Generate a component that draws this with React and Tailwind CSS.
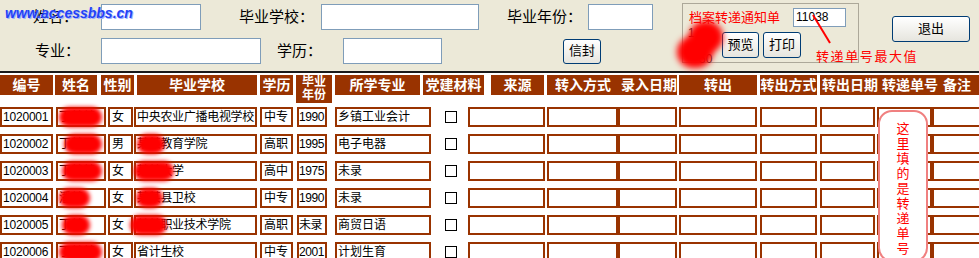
import React from "react";

const font = "font-['Liberation_Sans','Noto_Sans_CJK_SC',sans-serif]";

const rows = [
  { id: "1020001", name: "丁某某", nameBlob: "left-[1px] w-[43px]", sex: "女", school: "中央农业广播电视学校", schoolBlob: "", edu: "中专", year: "1990", major: "乡镇工业会计" },
  { id: "1020002", name: "丁某平", nameBlob: "left-[6px] w-[38px]", sex: "男", school: "某某教育学院", schoolBlob: "left-[1px] w-[28px]", edu: "高职", year: "1995", major: "电子电器" },
  { id: "1020003", name: "丁某某", nameBlob: "left-[4px] w-[40px]", sex: "女", school: "某某大学", schoolBlob: "left-[-2px] w-[40px]", edu: "高中", year: "1975", major: "未录" },
  { id: "1020004", name: "潘某", nameBlob: "left-[1px] w-[31px]", sex: "女", school: "某某县卫校", schoolBlob: "left-[0px] w-[27px]", edu: "中专", year: "1990", major: "未录" },
  { id: "1020005", name: "丁某", nameBlob: "left-[4px] w-[28px]", sex: "女", school: "某某职业技术学院", schoolBlob: "left-[-6px] w-[37px]", edu: "高职", year: "未录", major: "商贸日语" },
  { id: "1020006", name: "丁某某", nameBlob: "left-[1px] w-[43px]", sex: "女", school: "省计生校", schoolBlob: "", edu: "中专", year: "2001", major: "计划生育" },
];

const cell = "h-[20px] shrink-0 border-2 border-[#993300] bg-white text-[12px] leading-[16px] text-black whitespace-nowrap overflow-visible";
const head = "h-[20px] shrink-0 bg-[#993300] text-white font-bold text-[14px] leading-[20px] text-center whitespace-nowrap";
const box = "h-[26px] shrink-0 border border-[#7f9db9] bg-white";
const btn = "shrink-0 rounded-[3px] border border-[#003c74] bg-linear-to-b from-white to-[#e6e5de] text-[13px] text-black";

function Blob({ cls }) {
  if (!cls) return null;
  return <span className={`pointer-events-none absolute top-[-2px] h-[20px] rounded-full bg-[#ff0000] blur-[2px] ${cls}`} />;
}

export default function App() {
  return (
    <div className={`relative h-[258px] w-[979px] overflow-hidden bg-white ${font}`}>
      {/* form header */}
      <div className="flex h-[71px] bg-[#ECE9D8]">
        <div className="w-[682px] shrink-0 text-[15px] text-black">
          <div className="mt-[4px] flex h-[26px] items-center">
            <span className="w-[101px] shrink-0 pl-[33px]">姓名：</span>
            <div className={`${box} w-[100px]`} />
            <span className="ml-[38px] w-[82px] shrink-0">毕业学校：</span>
            <div className={`${box} w-[158px]`} />
            <span className="ml-[28px] w-[81px] shrink-0">毕业年份：</span>
            <div className={`${box} w-[65px]`} />
          </div>
          <div className="mt-[8px] flex h-[26px] items-center">
            <span className="w-[101px] shrink-0 pl-[35px]">专业：</span>
            <div className={`${box} w-[160px]`} />
            <span className="ml-[16px] w-[66px] shrink-0">学历：</span>
            <div className={`${box} w-[99px]`} />
            <button className={`${btn} ml-[121px] h-[25px] w-[38px]`}>信封</button>
          </div>
        </div>

        <div className="mt-[3px] h-[60px] w-[177px] shrink-0 border border-[#aca899]">
          <div className="flex items-center pt-[4px]">
            <span className="ml-[6px] text-[13px] text-[#ff0000]">档案转递通知单</span>
            <div className="ml-auto mr-[12px] h-[19px] w-[53px] border border-[#7f9db9] bg-white pl-[2px] text-[12px] leading-[17px]">11038</div>
          </div>
          <div className="mt-[4px] flex pl-[39px]">
            <button className={`${btn} h-[26px] w-[37px]`}>预览</button>
            <button className={`${btn} ml-[4px] h-[26px] w-[38px]`}>打印</button>
          </div>
        </div>

        <button className={`${btn} ml-[33px] mt-[16px] h-[26px] w-[78px]`}>退出</button>
      </div>
      <div className="h-[2px] bg-[#1a1a1a]" />

      {/* table header */}
      <div className="mt-[2px] flex items-start">
        <div className={`${head} w-[53px]`}>编号</div>
        <div className={`${head} ml-[2px] w-[42px]`}>姓名</div>
        <div className={`${head} ml-[4px] w-[33px]`}>性别</div>
        <div className={`${head} ml-[3px] w-[120px]`}>毕业学校</div>
        <div className={`${head} ml-[3px] w-[33px]`}>学历</div>
        <div className="ml-[3px] flex h-[28px] w-[36px] shrink-0 flex-col items-center justify-center bg-[#993300] text-[12px] font-bold leading-[13px] text-white">
          <span>毕业</span>
          <span>年份</span>
        </div>
        <div className={`${head} ml-[3px] w-[85px]`}>所学专业</div>
        <div className={`${head} ml-[3px] w-[61px]`}>党建材料</div>
        <div className={`${head} ml-[7px] w-[53px]`}>来源</div>
        <div className={`${head} ml-[3px] flex w-[130px]`}>
          <span className="ml-[8px]">转入方式</span>
          <span className="ml-[10px]">录入日期</span>
        </div>
        <div className={`${head} ml-[2px] w-[78px]`}>转出</div>
        <div className={`${head} ml-[3px] w-[57px]`}>转出方式</div>
        <div className={`${head} ml-[3px] flex w-[159px] text-[13px]`}>
          <span className="ml-[2px]">转出日期</span>
          <span className="ml-[4px]">转递单号</span>
          <span className="ml-[5px]">备注</span>
        </div>
      </div>

      {/* rows */}
      <div className="mt-[4px] flex flex-col gap-[7px]">
        {rows.map((r) => (
          <div key={r.id} className="flex h-[20px] items-center">
            <div className={`${cell} w-[53px] pl-[1px] tracking-[-0.2px]`}>{r.id}</div>
            <div className={`${cell} relative ml-[3px] w-[50px] pl-[1px] text-[#444]`}>
              {r.name}
              <Blob cls={r.nameBlob} />
            </div>
            <div className={`${cell} ml-[2px] w-[25px] pl-[2px]`}>{r.sex}</div>
            <div className={`${cell} relative ml-[1px] w-[123px] pl-[1px] tracking-[-0.3px]`}>
              {r.school}
              <Blob cls={r.schoolBlob} />
            </div>
            <div className={`${cell} ml-[3px] w-[33px] pl-[2px]`}>{r.edu}</div>
            <div className={`${cell} ml-[4px] w-[30px] tracking-[-0.4px]`}>{r.year}</div>
            <div className={`${cell} ml-[8px] w-[96px] pl-[1px]`}>{r.major}</div>
            <div className="w-[37px] shrink-0">
              <div className="ml-[14px] h-[12px] w-[12px] border border-black bg-white" />
            </div>
            <div className={`${cell} w-[77px]`} />
            <div className={`${cell} ml-[2px] w-[71px]`} />
            <div className={`${cell} w-[59px]`} />
            <div className={`${cell} ml-[2px] w-[78px]`} />
            <div className={`${cell} ml-[3px] w-[57px]`} />
            <div className={`${cell} ml-[3px] w-[55px]`} />
            <div className={`${cell} ml-[2px] w-[55px]`} />
            <div className={`${cell} w-[60px]`} />
          </div>
        ))}
      </div>

      {/* overlays: redaction, watermark, annotations */}
      <span className="absolute left-[688px] top-[24px] text-[12px] text-[#333]">1</span>
      <span className="absolute left-[699px] top-[50px] text-[12px] text-[#333]">50</span>
      <span className="pointer-events-none absolute left-[689px] top-[21px] h-[32px] w-[34px] rounded-full bg-[#ff0000] blur-[3px]" />
      <span className="pointer-events-none absolute left-[677px] top-[36px] h-[32px] w-[36px] rounded-full bg-[#ff0000] blur-[3px]" />

      <div className="absolute left-[5px] top-[3px] font-['Liberation_Sans_Narrow','Liberation_Sans',sans-serif] text-[14px] font-bold italic text-[#2342f5] [text-shadow:1px_1px_0_#9fb0ff]">
        www.accessbbs.cn
      </div>
      <svg className="absolute left-[810px] top-[12px]" width="24" height="34" viewBox="0 0 24 34">
        <line x1="3" y1="3" x2="20" y2="31" stroke="#ff0000" strokeWidth="2" />
      </svg>
      <div className="absolute left-[816px] top-[47px] text-[13px] tracking-[1.6px] text-[#ff0000]">转递单号最大值</div>
      <div className="absolute left-[878px] top-[110px] flex h-[152px] w-[50px] flex-col items-center rounded-[14px] border-2 border-[#f08080] bg-white pt-[9px] text-[13px] leading-[15px] text-[#ff0000]">
        {"这里填的是转递单号".split("").map((c, i) => (
          <span key={i}>{c}</span>
        ))}
      </div>
    </div>
  );
}
